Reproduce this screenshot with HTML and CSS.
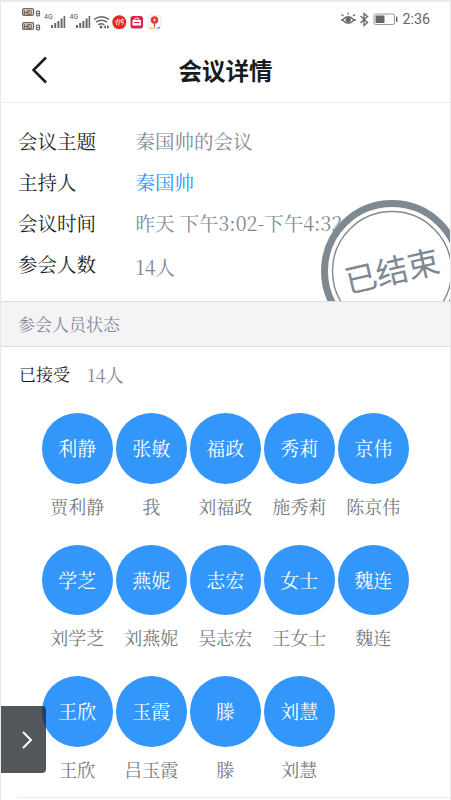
FILE: index.html
```html
<!DOCTYPE html>
<html lang="zh-CN">
<head>
<meta charset="utf-8">
<title>会议详情</title>
<link rel="stylesheet" href="styles.css">
</head>
<body>
<div class="screen">
  <div class="status">
    <svg class="status-left" width="150" height="28" viewBox="0 0 150 28">
      <g fill="none" stroke="#6b6b6b" stroke-width="1.2">
        <rect x="1.6" y="3.6" width="11" height="6.8" rx="1.5" fill="#ddd"/>
        <rect x="1.6" y="17.6" width="11" height="6.8" rx="1.5" fill="#ddd"/>
        <rect x="15.5" y="6.2" width="3" height="4.6" rx=".8"/>
        <rect x="15.5" y="20.2" width="3" height="4.6" rx=".8"/>
        <path d="M16 8.5h2M16 22.5h2" />
      </g>
      <g class="tiny">
        <text x="2.4" y="9.7" class="hd">HD</text><text x="2.4" y="23.7" class="hd">HD</text>
        <text x="23" y="13.5">4G</text><text x="48.5" y="13.5">4G</text>
      </g>
      <g fill="#696969">
        <path id="bars" d="M30 20h2v3h-2zM33.2 18h2v5h-2zM36.4 16h2v7h-2zM39.6 13.5h2v9.5h-2zM42.6 11h1.6v12h-1.6z"/>
        <use href="#bars" x="25"/>
        <circle cx="80" cy="22" r="1.5"/><path d="M82.5 22l2.5-2v4zM86 20l2.5 2-2.5 2z"/>
      </g>
      <g fill="none" stroke="#696969" stroke-width="1.5">
        <path d="M73 14.5q7.5-5.6 15 0M75 17.2q5.5-4 11 0M77.3 19.8q3-2 6 0"/>
      </g>
      <circle cx="98.3" cy="17.2" r="7" fill="#e62a22"/>
      <path d="M94 17l4-2M96.5 14l-1 6M99 14l-1.5 6.500M99 16l4-1.500M101.500 13.500l-1.500 4 2.500-.5-1 3" fill="none" stroke="#fbd0c8"/>
      <rect x="109.500" y="11" width="12.500" height="12.500" rx="2.500" fill="#d9264f"/>
      <path d="M111.500 15h8.500v5.500h-8.500z" fill="#fff"/>
      <path d="M113.500 15q0-2 2.200-2t2.200 2M112.500 17.500h6.500" fill="none" stroke="#fff"/>
      <path d="M113 17.500h5.500" stroke="#d9264f"/>
      <rect x="127" y="10.500" width="13" height="13.500" rx="2.500" fill="#f8f9fa" stroke="#e1e5e7" stroke-width=".7"/>
      <path d="M127.500 22.500h6v1.500h-5z" fill="#ffd34a"/><path d="M134 23.500l5-2v2z" fill="#60a7ef"/>
      <path d="M133.500 22v-5" stroke="#a93b37"/><circle cx="133.500" cy="15" r="3.800" fill="#ea3438"/>
      <path d="M132 15h3m-1.500-1.500v3" stroke="#ffdcda" stroke-width=".9"/>
    </svg>
    <div class="status-right">
      <svg width="60" height="18" viewBox="0 0 60 18" fill="none" stroke="#666" stroke-width="1.3">
        <path d="M2.500 10q5.500-6.500 11.500 0-5.500 6.500-11.500 0zM3.500 6l-2-1.500M8.200 4.500v-2M13 6l2-1.500M1 10h2m11 0h2"/>
        <circle cx="8.200" cy="9.800" r="2" fill="#666"/>
        <path d="M20.500 6l7 6.500-3.500 3v-12l3.500 3-7 6.500"/>
        <rect x="34" y="4" width="20.500" height="10.500" rx="1.700" stroke="#999" stroke-width="1"/>
        <path d="M35.500 5.500h9v7.500h-9z" fill="#666" stroke="none"/><path d="M56.700 6.500v5.500" stroke-width="1.500"/>
      </svg>
      <span class="clock">2:36</span>
    </div>
  </div>
  <header class="nav">
    <svg class="back" width="18" height="28" viewBox="0 0 18 28"><path d="M15 1.500L2.500 14 15 26.500" fill="none" stroke="#171c23" stroke-width="2.500"/></svg>
    <h1>会议详情</h1>
  </header>
  <section class="details">
    <div class="row"><span class="label">会议主题</span><span class="value">秦国帅的会议</span></div>
    <div class="row"><span class="label">主持人</span><span class="value link">秦国帅</span></div>
    <div class="row"><span class="label">会议时间</span><span class="value">昨天 下午3:02-下午4:32</span></div>
    <div class="row count-row"><span class="label">参会人数</span><span class="value">14人</span></div>
    <svg class="stamp" width="144" height="144" viewBox="0 0 144 144">
      <circle cx="72" cy="72" r="67.500" fill="none" stroke="#7e8992" stroke-width="7"/>
      <circle cx="72" cy="72" r="59.500" fill="none" stroke="#7e8992" stroke-width="1.400"/>
      <text x="72" y="84" transform="rotate(-13 72 72)">已结束</text>
    </svg>
  </section>
  <h2 class="section-title">参会人员状态</h2>
  <section class="people">
    <div class="accepted"><span>已接受</span><span class="total">14人</span></div>
    <div class="grid">
      <div class="person"><b>利静</b><span>贾利静</span></div>
      <div class="person"><b>张敏</b><span>我</span></div>
      <div class="person"><b>福政</b><span>刘福政</span></div>
      <div class="person"><b>秀莉</b><span>施秀莉</span></div>
      <div class="person"><b>京伟</b><span>陈京伟</span></div>
      <div class="person"><b>学芝</b><span>刘学芝</span></div>
      <div class="person"><b>燕妮</b><span>刘燕妮</span></div>
      <div class="person"><b>志宏</b><span>吴志宏</span></div>
      <div class="person"><b>女士</b><span>王女士</span></div>
      <div class="person"><b>魏连</b><span>魏连</span></div>
      <div class="person"><b>王欣</b><span>王欣</span></div>
      <div class="person"><b>玉霞</b><span>吕玉霞</span></div>
      <div class="person"><b>滕</b><span>滕</span></div>
      <div class="person"><b>刘慧</b><span>刘慧</span></div>
    </div>
  </section>
  <div class="drawer"><svg width="12" height="20" viewBox="0 0 12 20"><path d="M2 2l8 8-8 8" fill="none" stroke="#fff" stroke-width="2"/></svg></div>
</div>
</body>
</html>
```
FILE: styles.css
```css
* { box-sizing: border-box; }
body { margin: 0; background: #fff; }
.screen {
  position: relative;
  width: 451px;
  height: 800px;
  overflow: hidden;
  border: 1px solid #e9e9e9;
  border-top-width: 2px;
  border-bottom: 0;
  font-family: "Noto Serif CJK SC", "Noto Serif SC", "Source Han Serif SC", "Noto Sans CJK SC", serif;
  color: #1d1d1f;
}
.status { height: 34px; display: flex; justify-content: space-between; padding: 3px 20px 0 20px; }
.tiny { font: 7px Roboto, sans-serif; fill: #555; }
.hd { font-weight: 700; font-size: 6.5px; }
.status-right { display: flex; height: 28px; align-items: center; gap: 2px; }
.clock { font: 14.3px/18px Roboto, sans-serif; color: #666; }
.nav { height: 67px; border-bottom: 1px solid #ededed; display: grid; grid-template-columns: 60px 1fr 60px; align-items: center; }
.back { margin-left: 30px; margin-top: 1px; }
.nav h1 { margin: 1px 0 0; text-align: center; font: 700 23.5px/34px "Noto Sans CJK SC", sans-serif; color: #171c23; }
.details { position: relative; height: 198px; padding-top: 17px; overflow: hidden; }
.row { height: 41.2px; display: flex; align-items: center; padding-left: 17px; font-size: 19.5px; line-height: 28px; }
.label { width: 117.5px; }
.value { color: #818995; white-space: pre; }
.link { color: #2f91f5; }
.count-row .value { margin-top: 5px; }
.stamp { position: absolute; left: 319px; top: 96px; }
.stamp text { font: 32px "Noto Sans CJK SC", sans-serif; fill: #7e8992; text-anchor: middle; }
.section-title { margin: 0; height: 46px; border: solid #dedede; border-width: 1px 0; background: #f4f4f4; padding-left: 17px; font-size: 17px; line-height: 43px; font-weight: 400; color: #818995; }
.accepted { display: flex; gap: 17px; padding: 14px 0 0 18px; font-size: 17px; line-height: 26px; }
.total { color: #818995; font-size: 18px; }
.grid { display: grid; grid-template-columns: repeat(5, 70.500px); column-gap: 3.500px; grid-auto-rows: 131.700px; margin: 26px 0 0 41px; }
.person { display: flex; flex-direction: column; align-items: center; }
.person b { width: 70.500px; height: 70.500px; border-radius: 50%; background: #3296fa; color: #fff; font-size: 19px; line-height: 69px; font-weight: 400; text-align: center; }
.person span { font-size: 18px; line-height: 26px; margin-top: 9px; color: #77797e; white-space: nowrap; }
.people { height: 451px; position: relative; }
.people::after { content: ""; position: absolute; left: 17px; right: 0; bottom: 0; height: 1px; background: #ececec; }
.drawer { position: absolute; left: 0; top: 704px; width: 45px; height: 67px; border-radius: 0 4px 4px 0; background: rgba(35, 39, 44, .78); display: flex; align-items: center; justify-content: center; padding-left: 6px; }
```
